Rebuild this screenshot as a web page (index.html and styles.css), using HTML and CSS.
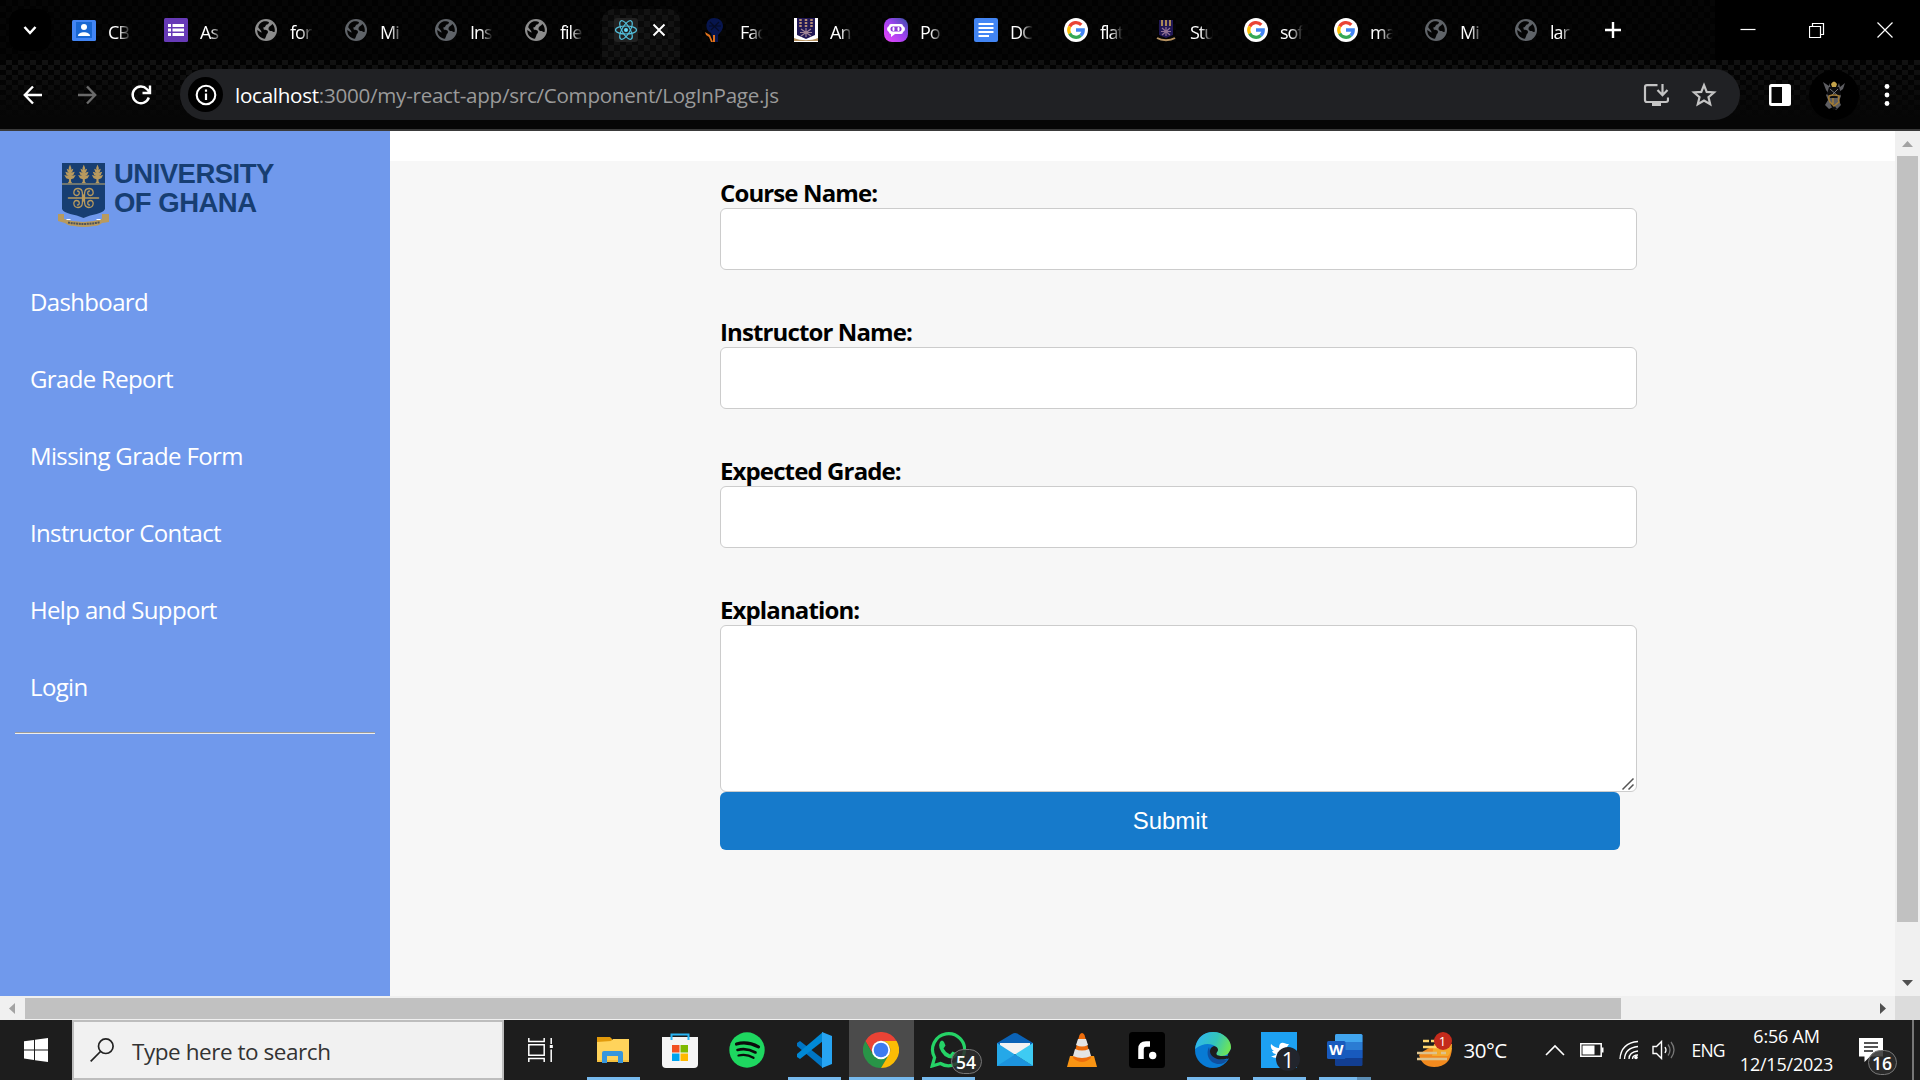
FILE: index.html
```html
<!DOCTYPE html>
<html lang="en">
<head>
<meta charset="utf-8">
<title>Missing Grade Form</title>
<link rel="stylesheet" href="styles.css">
</head>
<body>
<svg class="defs" aria-hidden="true">
  <defs>
    <symbol id="globe" viewBox="0 0 24 24"><circle cx="12" cy="12" r="11"/><path fill="#050505" d="M11 3.200c2 0 3 .4 4 1-.2 1.500-1.300 2.300-2.800 2.600-.8 1.500-1.200 2.600-3 2.700l.7 2.300c2 .1 4.100.2 4.100 2.200 0 1.500-1.600 1.700-1.700 3.500l-1.300 3.300C6 20.300 3.200 16.500 3.200 12l4.300 2.700-.3-1.800-3-3.700C5 5.700 7.700 3.200 11 3.200zM15.500 8.500c1.300-.8 2.300-1.500 3-2.500 2 2.200 2.600 5 2.200 7.700-.8.8-2 .3-2.700-.8-1.500.2-3.500-.5-3.500-2 0-1.200.4-1.900 1-2.400z"/></symbol>
    <symbol id="google" viewBox="0 0 24 24"><circle cx="12" cy="12" r="12" fill="#fff"/><g fill="none" stroke-width="3.300"><path stroke="#ea4335" d="M17.300 6.900A7.200 7.200 0 0 0 5.700 8.500"/><path stroke="#fbbc05" d="M5.700 8.500a7.200 7.200 0 0 0 0 7"/><path stroke="#34a853" d="M5.700 15.500A7.200 7.200 0 0 0 16.800 17.500"/><path stroke="#4285f4" d="M16.800 17.500A7.200 7.200 0 0 0 19.200 12H12"/></g></symbol>
    <symbol id="wheat" viewBox="0 0 12 20"><path fill="#b89a5e" d="M6 0l1.500 4-.7 1.500L9.500 4.500 8.500 7.500 7 8.800l4-1.300L9.500 11 7.500 12.200 12 11l-2 3.500-2.900 1V18l1.500 2H3.400l1.500-2v-2.500L2 14.500 0 11l4.500 1.200L2.500 11 1 7.500l4 1.300-1.500-1.300-1-3 2.700 1L4.500 4z"/></symbol>
  </defs>
</svg>

<header class="titlebar">
  <div class="tab-search"><svg width="16" height="12" viewBox="0 0 16 12"><path d="M2.500 3l5.500 6 5.500-6" fill="none" stroke="#fff" stroke-width="2.500"/></svg></div>
  <div class="tab tab-first"><svg class="fav" viewBox="0 0 24 24"><rect y="2" width="24" height="21" rx="1.500" fill="#4285f4"/><rect x="4" y="4" width="16" height="16" fill="#1967d2"/><circle cx="12" cy="9" r="3" fill="#fff"/><path fill="#fff" d="M6 18c0-5 12-5 12 0z"/></svg><span class="tab-text">CB</span></div>
  <div class="tab"><svg class="fav" viewBox="0 0 24 24"><rect width="24" height="24" rx="1.500" fill="#673ab7"/><path fill="#fff" d="M4 6h3v3H4zM8.500 6H20v3H8.500zM4 10.500h3v3H4zM8.500 10.500H20v3H8.500zM4 15h3v3H4zM8.500 15H20v3H8.500z"/></svg><span class="tab-text">As</span></div>
  <div class="tab"><svg class="fav globe-light"><use href="#globe"/></svg><span class="tab-text">for</span></div>
  <div class="tab"><svg class="fav globe-dark"><use href="#globe"/></svg><span class="tab-text">Mi</span></div>
  <div class="tab"><svg class="fav globe-dark"><use href="#globe"/></svg><span class="tab-text">Ins</span></div>
  <div class="tab"><svg class="fav globe-light"><use href="#globe"/></svg><span class="tab-text">file</span></div>
  <div class="tab tab-active"><svg class="fav" viewBox="0 0 24 24"><rect width="24" height="24" rx="3" fill="#222"/><g fill="none" stroke="#53c1de" stroke-width="1.200"><ellipse cx="12" cy="12" rx="10.500" ry="4"/><ellipse cx="12" cy="12" rx="10.500" ry="4" transform="rotate(60 12 12)"/><ellipse cx="12" cy="12" rx="10.500" ry="4" transform="rotate(120 12 12)"/></g><circle cx="12" cy="12" r="2" fill="#61dafb"/></svg><svg class="tab-close" width="14" height="14" viewBox="0 0 14 14"><path d="M1.500 1.500l11 11m0-11l-11 11" stroke="#fff" stroke-width="2"/></svg></div>
  <div class="tab"><svg class="fav" viewBox="0 0 24 24"><path fill="#07154d" d="M10 0c5 0 9 3 9 8 0 4-3 7-5 9v7h-4l-3-9C0 12 1 0 10 0z"/><path fill="none" stroke="#050b25" stroke-width="1.200" d="M5 8h12M6 4l9 9M15 4l-8 8"/><path fill="#df711d" d="M1 14l5 3 3 7H7l-2-5-3-2zM9 17h2v7H9z"/></svg><span class="tab-text">Fac</span></div>
  <div class="tab"><svg class="fav" viewBox="0 0 24 24"><path fill="#fff" d="M0 0h24v24H0z"/><path fill="#211855" d="M3 0h18v17l-9 4-9-4z"/><path stroke="#b48c75" stroke-width="2.500" stroke-dasharray="2 1" d="M6.500 1v8M12 1v8M17.500 1v8"/><path fill="none" stroke="#9f8495" stroke-width="1.200" d="M7 11l10 7m0-7L7 18m5-8v9M6 14.500h12"/><path fill="#b79361" d="M0 20c7 3 17 3 24 0v3H0z"/></svg><span class="tab-text">An</span></div>
  <div class="tab"><svg class="fav" viewBox="0 0 24 24"><defs><linearGradient id="poe" x1="0" y1="1" x2="1" y2="0"><stop stop-color="#ef45fa"/><stop offset=".55" stop-color="#9c42ef"/><stop offset="1" stop-color="#3552a5"/></linearGradient></defs><rect width="24" height="24" rx="8" fill="url(#poe)"/><path fill="#fff" d="M7 6h10q2 0 2 2 2 1 2 3t-2 3q0 2-2 2h-6l-4 3v-3q-2 0-2-2-2-1-2-3t2-3q0-2 2-2z"/><rect x="6.500" y="8.500" width="11" height="5" rx="2" fill="#8d3bd7"/><path stroke="#fff" stroke-width="2" stroke-linecap="round" d="M9.500 10v2M14.500 10v2"/></svg><span class="tab-text">Po</span></div>
  <div class="tab"><svg class="fav" viewBox="0 0 24 24"><rect width="24" height="24" rx="2" fill="#4285f4"/><path stroke="#fff" stroke-width="2.200" d="M4.500 6h15M4.500 10h15M4.500 14h15M4.500 18H15"/></svg><span class="tab-text">DC</span></div>
  <div class="tab"><svg class="fav"><use href="#google"/></svg><span class="tab-text">flat</span></div>
  <div class="tab"><svg class="fav" viewBox="0 0 24 24"><path fill="#211855" d="M5 2h14v15l-7 3-7-3z"/><path stroke="#a98957" stroke-width="2" d="M8 2v6M12 2v6M16 2v6"/><path fill="none" stroke="#8f7194" stroke-width="1.200" d="M8 10l8 7m0-7l-8 7m4-8v9M7 13.500h10"/><path fill="none" stroke="#b79361" stroke-width="2" d="M3 20c5 3 13 3 18 0"/></svg><span class="tab-text">Stu</span></div>
  <div class="tab"><svg class="fav"><use href="#google"/></svg><span class="tab-text">sof</span></div>
  <div class="tab"><svg class="fav"><use href="#google"/></svg><span class="tab-text">ma</span></div>
  <div class="tab"><svg class="fav globe-dark"><use href="#globe"/></svg><span class="tab-text">Mi</span></div>
  <div class="tab"><svg class="fav globe-dark"><use href="#globe"/></svg><span class="tab-text">lar</span></div>
  <svg class="new-tab" width="16" height="16" viewBox="0 0 16 16"><path d="M8 0v16M0 8h16" stroke="#fff" stroke-width="2.400"/></svg>
  <div class="win-controls">
    <svg viewBox="0 0 16 16"><path d="M.5 7.500h15"/></svg>
    <svg viewBox="0 0 16 16"><path d="M.5 4.500h11v11H.5zM3.500 4V1.500h11v11H12"/></svg>
    <svg viewBox="0 0 16 16"><path d="M.5.500l15 15m0-15l-15 15"/></svg>
  </div>
</header>

<div class="toolbar">
  <svg class="nav-btn" viewBox="0 0 24 24"><path d="M21 12H4.500M12 3.500L3.800 12l8.200 8.500"/></svg>
  <svg class="nav-btn nav-off" viewBox="0 0 24 24"><path d="M3 12h16.500M12 3.500l8.200 8.500-8.200 8.500"/></svg>
  <svg class="nav-btn" viewBox="0 0 24 24"><path d="M19.800 14.500A8.300 8.300 0 1 1 18 6.200l2.500 2.800M21 2.500V10h-7.500"/></svg>
  <div class="omnibox">
    <span class="site-info"><svg width="22" height="22" viewBox="0 0 22 22"><circle cx="11" cy="11" r="9.300" fill="none" stroke="#fff" stroke-width="2.100"/><path d="M11 9.500V16M11 5.500v2.300" stroke="#fff" stroke-width="2.200"/></svg></span>
    <span class="url"><b>localhost</b>:3000/my-react-app/src/Component/LogInPage.js</span>
    <svg class="install" width="26" height="24" viewBox="0 0 26 24"><path d="M14.500 2.200H4Q2 2.200 2 4v13q0 2 2 2h19q2 0 2-2v-2.500" fill="none" stroke="#c4c4c4" stroke-width="2.200"/><path d="M19.500 1v11m-5-5l5 5.200 5-5.200" fill="none" stroke="#c4c4c4" stroke-width="2.200"/><path d="M9 19h9v4H9z" fill="#c4c4c4"/></svg>
    <svg class="star" width="26" height="26" viewBox="0 0 26 26"><path d="M13 3.200l2.700 6.700 7.300.6-5.500 4.700 1.700 7.100L13 18.500l-6.200 3.800 1.700-7.100L3 10.500l7.300-.6z" fill="none" stroke="#c4c4c4" stroke-width="2.200"/></svg>
  </div>
  <svg class="panel" width="22" height="22" viewBox="0 0 22 22"><rect width="22" height="22" rx="2.500" fill="#fff"/><path fill="#050505" d="M2.500 3H13v16H2.500z"/></svg>
  <span class="avatar"><svg width="26" height="32" viewBox="0 0 26 32"><path fill="#5d5d61" d="M2 3l6 4V4l2 5h6l2-5 1 4 5-4-2 6-4 3 2 4-2 5 2 4-5 5-3-3-4 2-4-4 3-5-2-5 2-2-2-3z"/><path fill="#0c0c0e" d="M8 8h10l2 7-4 4H9l-3-4zM9 24l4 2 3 4-4 1z"/><path fill="#c5a44b" d="M10 5q3-5 6 0l-1 3h-4z"/><path stroke="#77777b" d="M9 10l8 7M17 10l-7 7"/><path fill="none" stroke="#a37c36" stroke-width="1.500" d="M8 17q5-2 10 0-1 4 0 6l-5 4-4-4q-2-3-1-6zM12 19v6"/></svg></span>
  <svg class="dots" width="6" height="24" viewBox="0 0 6 24"><g fill="#fff"><circle cx="3" cy="3.500" r="2.400"/><circle cx="3" cy="12" r="2.400"/><circle cx="3" cy="20.500" r="2.400"/></g></svg>
</div>

<main class="page">
  <aside class="sidebar">
    <div class="brand">
      <svg width="54" height="66" viewBox="0 0 54 66"><path fill="#173e72" d="M5 2h43v46c-2 5-13 5-21.500 9C18 53 7 53 5 48z"/><g><use href="#wheat" x="7" y="3.500" width="12" height="19"/><use href="#wheat" x="20.800" y="3.500" width="12" height="19"/><use href="#wheat" x="34.500" y="3.500" width="12" height="19"/></g><path stroke="#8d8970" stroke-width="1.500" d="M5 23h43"/><g fill="none" stroke="#b89a5e" stroke-width="1.300" stroke-linecap="round"><path stroke-width="1.600" d="M11.500 37h30M26.500 34v6"/><path id="curl" d="M25.500 36.500C25.500 32 26 27.500 21 27.500c-5 0-5.500 7-1.500 7 3.500 0 3.500-4.500 1-4.500"/><use href="#curl" transform="matrix(-1 0 0 1 53 0)"/><use href="#curl" transform="matrix(1 0 0 -1 0 74)"/><use href="#curl" transform="rotate(180 26.500 37)"/></g><path fill="#b89a5e" d="M1 53h6v5q19 6 38 0v-5h7v8l-7 1q-3 3-8 3-10 2-20 0-6 0-9-3l-7-2z"/><path stroke="#fff" stroke-width="1" d="M9.500 58.500h4M39.500 58.500h4"/><path fill="none" stroke="#4e5358" stroke-width="2" stroke-dasharray="2 .7" d="M11 61.500q16 3 32-.3"/></svg>
      <div class="brand-name"><div class="brand-a">UNIVERSITY</div><div class="brand-b">OF GHANA</div></div>
    </div>
    <nav class="menu">
      <a>Dashboard</a><a>Grade Report</a><a>Missing Grade Form</a><a>Instructor Contact</a><a>Help and Support</a><a>Login</a>
    </nav>
    <div class="rule"></div>
  </aside>
  <section class="content">
    <form class="form">
      <label for="course">Course Name:</label><input id="course" type="text">
      <label for="instructor">Instructor Name:</label><input id="instructor" type="text">
      <label for="grade">Expected Grade:</label><input id="grade" type="text">
      <label for="explanation">Explanation:</label>
      <div class="area"><textarea id="explanation"></textarea><svg class="grip" width="14" height="14" viewBox="0 0 14 14"><path d="M1.500 12.500l11-11M7.500 12.500l5-5" stroke="#555" stroke-width="1.500"/></svg></div>
      <button type="button">Submit</button>
    </form>
  </section>
  <div class="vscroll"><svg width="11" height="6" viewBox="0 0 11 6"><path fill="#a3a3a3" d="M5.500 0L11 6H0z"/></svg><div class="vthumb"></div><svg class="down" width="11" height="6" viewBox="0 0 11 6"><path fill="#505050" d="M0 0h11L5.500 6z"/></svg></div>
</main>
<div class="hscroll"><svg width="6" height="11" viewBox="0 0 6 11"><path fill="#a3a3a3" d="M6 0v11L0 5.500z"/></svg><div class="hthumb"></div><svg class="right" width="6" height="11" viewBox="0 0 6 11"><path fill="#505050" d="M0 0v11l6-5.500z"/></svg><div class="corner"></div></div>

<footer class="taskbar">
  <div class="start"><svg width="24" height="24" viewBox="0 0 24 24"><path fill="#fff" d="M0 3.300l10-1.400v9.500H0zM11 1.700L24 0v11.400H11zM0 12.500h10V22L0 20.600zM11 12.500h13V24l-13-1.700z"/></svg></div>
  <div class="search"><svg width="24" height="24" viewBox="0 0 24 24"><circle cx="15.800" cy="8.200" r="7.300" fill="none" stroke="#222" stroke-width="1.700"/><path d="M10.500 13.500L.7 23.300" stroke="#222" stroke-width="1.700"/></svg><span>Type here to search</span></div>
  <div class="taskview"><svg width="26" height="24" viewBox="0 0 26 24"><g fill="none" stroke="#fff" stroke-width="1.500"><path d="M.8 0v3.500h15.400V0M.8 24v-3.500h15.400V24M.8 6.800h15.400v10.500H.8zM23.200 0v6M23.200 11.500V24"/></g><path fill="#fff" d="M21.800 7h3v3h-3z"/></svg></div>
  <div class="apps">
    <div class="app run"><svg viewBox="0 0 36 36"><path fill="#e29a0b" d="M2 5h13l2 2v5H2z"/><path fill="#ffd35b" d="M2 10l14-1 2-2h16v23H2z"/><path fill="#f4c03e" d="M2 28h32v2H2z"/><path fill="#3796dc" d="M7 31V21q0-2 2-2h17q2 0 2 2v10h-5v-7H12v7z"/></svg></div>
    <div class="app"><svg viewBox="0 0 36 36"><path fill="#f5f5f5" d="M0 5h36v27q0 4-4 4H4q-4 0-4-4z"/><path fill="none" stroke="#28b5f5" stroke-width="2" d="M9.500 8V2.500h17V8"/><path fill="#f25022" d="M10 13h7.500v7.500H10z"/><path fill="#7fba00" d="M18.500 13H26v7.500h-7.500z"/><path fill="#00a4ef" d="M10 21.500h7.500V29H10z"/><path fill="#ffb900" d="M18.500 21.500H26V29h-7.500z"/></svg></div>
    <div class="app"><svg viewBox="0 0 36 36"><circle cx="18" cy="18" r="17.700" fill="#1ed760"/><g fill="none" stroke="#0b0b0b" stroke-linecap="round"><path stroke-width="3.200" d="M7.500 12q11-3 22 2.800"/><path stroke-width="2.600" d="M8.500 18q9-2.500 18 2.500"/><path stroke-width="2.200" d="M9.500 23.500q8-2 15 2.300"/></g></svg></div>
    <div class="app run"><svg viewBox="0 0 36 36"><path fill="#0075c4" d="M1 11l3-2 23 18v9L1 14z"/><path fill="#0089d6" d="M1 25l3 2L27 9V0L1 22z"/><path fill="#27a4f2" d="M26 0l10 4v28l-10 4z"/></svg></div>
    <div class="app run active"><svg viewBox="0 0 36 36"><path fill="#ea4335" d="M2.400 9A18 18 0 0 1 33.600 9H18a9 9 0 0 0-8 13z"/><path fill="#289447" d="M2.400 9A18 18 0 0 0 18 36l8-13.500H10z"/><path fill="#fbbc05" d="M33.600 9A18 18 0 0 1 18 36l8-13.500A9 9 0 0 0 18 9z"/><circle cx="18" cy="18" r="9.200" fill="#fff"/><circle cx="18" cy="18" r="7.300" fill="#3c7bf0"/></svg></div>
    <div class="app run"><svg viewBox="0 0 36 36"><path fill="none" stroke="#25d366" stroke-width="3.200" d="M2.200 34l2.400-8.500A16 16 0 1 1 10.500 31.500z"/><path fill="#25d366" d="M10 10q2-3 4 0l1.500 3.500-2 3q2 4 6.500 6l2.500-3 4.500 2q0 5-5 5Q13 26 9.500 16 8.500 13 10 10z"/></svg><span class="badge pill">54</span></div>
    <div class="app"><svg viewBox="0 0 36 36"><path fill="#0b63b7" d="M0 11L15 2q3-2 6 0l15 9v6H0z"/><path fill="#f2f2f2" d="M3 11h30v11H3z"/><path fill="#25a8e8" d="M0 11l36 23H0z"/><path fill="#3ecbf3" d="M36 11v23L18 22.500z"/><path fill="#1c93dd" d="M0 34l18-11.500L36 34z"/></svg></div>
    <div class="app"><svg viewBox="0 0 36 36"><path fill="#f99413" d="M6 24h24l3 11H3z"/><path fill="#ed6c0b" d="M15.500 3q2.500-4 5 0L27 26q-9 8-18 0z"/><path fill="#e4e4e4" d="M14 7h8l2 6q-6 3-12 0zM11 17q7 3 14 0l2 7q-9 4-18 0z"/></svg></div>
    <div class="app narrow"><svg viewBox="0 0 36 36"><rect width="36" height="36" rx="3.500" fill="#000"/><path fill="none" stroke="#fff" stroke-width="5.500" d="M12 27V17q0-5 5-5h4"/><circle cx="23.700" cy="23.500" r="3.700" fill="#fff"/></svg></div>
    <div class="app run narrow"><svg viewBox="0 0 36 36"><defs><linearGradient id="eg" x1="0" x2="1" y1=".3" y2=".6"><stop stop-color="#2fb5f0"/><stop offset=".55" stop-color="#34c6b9"/><stop offset="1" stop-color="#70e552"/></linearGradient></defs><circle cx="18" cy="18" r="18" fill="#087bd4"/><path fill="url(#eg)" d="M0 17C2 5 9 0 18 0c11 0 18 8 18 15 0 6-5 9-9 9-4 0-7-1-5-4C25 14 12 7 0 17z"/><path fill="#104f9d" d="M14 15c-4 8 1 17 10 17 4 0 7-2 9-5-4 2-9 1-12-1-4-3-6-6-7-11z"/><path fill="#1d1d1d" d="M19 14c-6 2-5 9 1 12 4 2 9 2 13 0l3-6v4h-9c-4 0-7-1-5-4 2-2 1-5-3-6z"/><path fill="#1d1d1d" d="M36 17v9l-4 1 1-5z"/></svg></div>
    <div class="app run narrow"><svg viewBox="0 0 36 36"><path fill="#1da1f2" d="M0 0h36v36H0z"/><path fill="#fff" d="M10 12q4 4 8 4 0-6 5-5l3 1h2l-2 3q0 11-10 11-4 0-6-2 4 0 5-2-3 0-4-3h2q-4-2-3-7z"/></svg><span class="badge round">1</span></div>
    <div class="app run narrow word"><svg viewBox="0 0 36 36"><rect x="8" y="2" width="27.500" height="32" rx="1.500" fill="#123e91"/><path fill="#185abd" d="M8 18h27.500v8H8z"/><path fill="#2b7cd3" d="M8 10h27.500v8H8z"/><path fill="#41a5ee" d="M8 10V3.500Q8 2 9.500 2H34q1.500 0 1.500 1.500V10z"/><rect y="9" width="18.500" height="18" rx="1.500" fill="#185abd"/><text x="9.200" y="23" text-anchor="middle" fill="#fff" class="w">W</text></svg></div>
  </div>
  <div class="weather"><svg width="38" height="36" viewBox="0 0 38 36"><path fill="#f28a1e" d="M3 23q13-13 33-7-1 19-18 19Q6 35 3 23z"/><path fill="#f4aa2b" d="M18 12h18q0 8-4 12H16z"/><path stroke="#ffd66e" stroke-width="2.700" d="M7 9h6M15 9h6M7 15h18"/><path stroke="#dec28d" stroke-width="2.700" d="M1 21h20M25 21h5M1 27h30"/></svg><span class="alert">1</span></div>
  <span class="temp">30°C</span>
  <svg class="t-chev" width="20" height="12" viewBox="0 0 20 12"><path d="M1 11l9-9 9 9" fill="none" stroke="#fff" stroke-width="1.600"/></svg>
  <svg class="t-bat" width="24" height="14" viewBox="0 0 24 14"><path d="M.8.800h20.400v12.400H.8z" fill="none" stroke="#fff" stroke-width="1.500"/><path fill="#fff" d="M2.500 2.500h12v9h-12zM22 4.500h1.500v5H22z"/></svg>
  <svg class="t-wifi" width="20" height="20" viewBox="0 0 20 20"><g fill="none" stroke="#fff" stroke-width="1.300"><path d="M1 19Q2 3 19 1.500M5.500 19Q6 8 19 6.500M10 19q0-7 9-8"/><path d="M13.500 19q0-4 5.500-4"/></g><circle cx="17" cy="17.500" r="1.800" fill="#fff"/></svg>
  <svg class="t-vol" width="24" height="20" viewBox="0 0 24 20"><path d="M1 6.500h3.500l5-5v17l-5-5H1z" fill="none" stroke="#fff" stroke-width="1.400"/><path d="M13 7q2 3 0 6" stroke="#fff" fill="none" stroke-width="1.300"/><path d="M16 4.500q4 5.500 0 11M19 2q6 8 0 16" stroke="#777" fill="none" stroke-width="1.300"/></svg>
  <span class="lang">ENG</span>
  <div class="clock"><span class="time">6:56 AM</span><span class="date">12/15/2023</span></div>
  <div class="notes"><svg width="24" height="24" viewBox="0 0 24 24"><path fill="#fff" d="M0 0h24v18.500H11L5.500 24v-5.500H0z"/><path stroke="#1d1d1d" stroke-width="1.500" d="M5 5h14M5 9h14M5 13h9"/></svg><span class="badge pill count">16</span></div>
  <div class="peek"></div>
</footer>
</body>
</html>
```
FILE: styles.css
```css
* { box-sizing: border-box; }
body {
  margin: 0;
  width: 1920px;
  height: 1080px;
  overflow: hidden;
  display: flex;
  flex-direction: column;
  font-family: "Open Sans", "Noto Sans", sans-serif;
  background: #fff;
}
svg { display: block; flex: none; }
.defs { width: 0; height: 0; position: absolute; }

/* Browser tab strip */
.titlebar {
  flex: none;
  height: 60px;
  display: flex;
  align-items: center;
  background: repeating-conic-gradient(#060606 0 25%, #020202 0 50%) 0 0 / 12px 12px;
}
.tab-search {
  width: 42px; height: 42px;
  margin: 0 21px 0 9px;
  border-radius: 13px;
  background: #000;
  display: flex; align-items: center; justify-content: center;
}
.tab { flex: none; width: 90px; display: flex; align-items: center; gap: 12px; }
.tab-first { width: 92px; }
.fav { width: 24px; height: 24px; }
.globe-light { fill: #8c8c8c; }
.globe-dark { fill: #5f6368; }
.tab-text {
  width: 23px;
  overflow: hidden;
  white-space: nowrap;
  color: #fff;
  font-size: 18px;
  line-height: 26px;
  letter-spacing: -1px;
  padding-top: 3px;
  -webkit-mask-image: linear-gradient(90deg, #000 45%, transparent);
  mask-image: linear-gradient(90deg, #000 45%, transparent);
}
.tab-active {
  width: 78px;
  height: 51px;
  margin: 9px 24px 0 -12px;
  padding: 0 0 9px 12px;
  border-radius: 12px 12px 0 0;
  background: repeating-conic-gradient(#131313 0 25%, #090909 0 50%) 0 0 / 12px 12px;
}
.tab-close { margin-left: 2px; }
.new-tab { margin-left: 1px; }
.win-controls {
  margin-left: auto;
  width: 205px;
  height: 60px;
  display: flex;
  align-items: center;
  gap: 52.500px;
  padding-left: 25px;
  background: #000;
}
.win-controls svg { width: 16px; height: 16px; fill: none; stroke: #fff; stroke-width: 1.200; }

/* Address bar row */
.toolbar {
  flex: none;
  height: 71px;
  border-bottom: 2px solid #3a3a3a;
  display: flex;
  align-items: center;
  padding-left: 21px;
  background: linear-gradient(transparent, #060606 58px), repeating-conic-gradient(#121212 0 25%, #020202 0 50%) 0 0 / 12px 10px;
}
.nav-btn { width: 24px; height: 24px; margin-right: 30px; fill: none; stroke: #fff; stroke-width: 2.400; }
.nav-off { stroke: #6b6b6b; }
.omnibox {
  width: 1560px;
  height: 51px;
  margin-left: -3px;
  border-radius: 26px;
  background: #202124;
  display: flex;
  align-items: center;
  padding-left: 8px;
}
.site-info {
  width: 35px; height: 35px;
  border-radius: 50%;
  background: #000;
  display: flex; align-items: center; justify-content: center;
}
.url {
  margin-left: 12px;
  color: #9a9a9a;
  font-size: 20.600px;
  line-height: 30px;
  letter-spacing: -.270px;
  white-space: nowrap;
}
.url b { color: #fff; font-weight: 400; }
.install { margin-left: auto; }
.star { margin: 0 23px 0 22px; }
.panel { margin-left: 29px; }
.avatar {
  width: 50px; height: 50px;
  margin-left: 18px;
  border-radius: 50%;
  background: #000;
  display: flex; align-items: center; justify-content: center;
}
.dots { margin-left: 25px; }

/* Page */
.page { flex: none; height: 865px; display: flex; }
.sidebar { width: 390px; background: #7099ec; }
.brand { display: flex; padding: 30px 0 0 57px; height: 132px; }
.brand-name {
  margin-left: 3px;
  color: #173e72;
  font: bold 27.500px/28.500px "Liberation Sans", Arial, sans-serif;
  letter-spacing: -.520px;
  margin-top: -1px;
  white-space: nowrap;
}
.menu { display: flex; flex-direction: column; }
.menu a {
  height: 77px;
  line-height: 77px;
  padding-left: 30px;
  color: #fff;
  font-size: 24px;
  letter-spacing: -.650px;
}
.rule { height: 2px; margin: 7px 15px 0; border-top: 1px solid #9a9a9a; border-bottom: 1px solid #eee; }
.content { width: 1505px; border-top: 30px solid #fff; background: #f7f7f7; }
.form { width: 917px; margin-left: 330px; padding-top: 15px; display: flex; flex-direction: column; }
.form label { height: 32px; line-height: 34px; font-size: 24px; font-weight: 700; color: #000; letter-spacing: -.880px; }
.form input {
  height: 62px;
  margin: 0 0 45px;
  padding: 0 15px;
  border: 1px solid #ccc;
  border-radius: 6px;
  background: #fff;
}
.area { position: relative; height: 167px; }
.area textarea {
  display: block;
  width: 100%;
  height: 167px;
  border: 1px solid #ccc;
  border-radius: 6px;
  resize: none;
  background: #fff;
}
.grip { position: absolute; right: 2px; bottom: 1px; }
.form button {
  width: 900px;
  height: 58px;
  border: 0;
  border-radius: 6px;
  background: #167acb;
  color: #fff;
  font: 24px "Liberation Sans", Arial, sans-serif;
  letter-spacing: 0;
}
.vscroll { width: 25px; background: #f0f0f0; display: flex; flex-direction: column; align-items: center; padding-top: 10px; }
.vthumb { width: 21px; height: 766px; margin-top: 9px; background: #c1c1c1; }
.down { margin-top: 58px; }
.hscroll { flex: none; height: 24px; background: #f0f0f0; display: flex; align-items: center; padding-left: 9px; }
.hthumb { width: 1596px; height: 21px; margin-left: 10px; background: #c1c1c1; }
.right { margin-left: 259px; }
.corner { width: 25px; height: 24px; margin-left: auto; background: #dcdcdc; }

/* Taskbar */
.taskbar { flex: none; height: 60px; display: flex; align-items: center; background: #1d1d1d; color: #fff; white-space: nowrap; }
.start { width: 72px; padding-left: 24px; }
.search {
  width: 432px; height: 60px;
  border: 2px solid #bdbdbd;
  background: #f1f1f1;
  display: flex; align-items: center; gap: 18px;
  padding-left: 16px;
  color: #333;
  font-size: 22.500px;
  letter-spacing: -.450px;
}
.search span { padding-top: 2px; }
.taskview { padding-left: 24px; width: 75.500px; }
.apps { display: flex; width: 799px; }
.app { position: relative; flex: none; width: 67px; height: 60px; display: flex; align-items: center; justify-content: center; }
.app svg { width: 36px; height: 36px; }
.narrow { width: 66px; left: -1.500px; }
.run { border-bottom: 3px solid transparent; padding-top: 3px; background: linear-gradient(#76b9ed, #76b9ed) center 57px / 53px 3px no-repeat border-box; }
.active { background: linear-gradient(#76b9ed, #76b9ed) center 57px / 65px 3px no-repeat border-box, linear-gradient(#4b4b4b, #4b4b4b) center / 65px 60px no-repeat border-box; }
.word { background: linear-gradient(#5b8db5, #5b8db5) 45px 57px / 14px 3px no-repeat border-box, linear-gradient(#76b9ed, #76b9ed) 7px 57px / 38px 3px no-repeat border-box; }
.w { font: bold 15px "Open Sans", sans-serif; }
.badge { position: absolute; display: flex; align-items: center; justify-content: center; color: #fff; }
.pill { left: 36px; top: 29px; width: 31px; height: 25px; border: 1px solid #777; border-radius: 13px; background: rgba(45,45,45,.85); font-size: 17.500px; font-weight: 600; }
.round { left: 30px; top: 27px; width: 24px; height: 24px; border-radius: 50%; background: #22252d; font-size: 22px; }
.weather { position: relative; margin-left: 37px; }
.alert { position: absolute; left: 18px; top: 0; width: 18px; height: 18px; border-radius: 50%; background: #c42b1c; font-size: 13px; line-height: 18px; text-align: center; }
.temp { width: 43px; margin-left: 10px; font-size: 20.500px; letter-spacing: -.500px; }
.t-chev { margin-left: 38px; }
.t-bat { margin-left: 15px; }
.t-wifi { margin-left: 15px; }
.t-vol { margin-left: 13px; }
.lang { width: 33px; margin-left: 16px; font-size: 17.500px; letter-spacing: -.800px; }
.clock { width: 96px; margin-left: 14px; display: flex; flex-direction: column; align-items: center; gap: 4px; font-size: 18px; line-height: 24px; letter-spacing: -.220px; }
.notes { position: relative; margin-left: 24px; }
.count { left: 9px; top: 12px; width: 29px; }
.peek { margin-left: auto; margin-right: 6px; width: 2px; height: 60px; background: #777; }
```
